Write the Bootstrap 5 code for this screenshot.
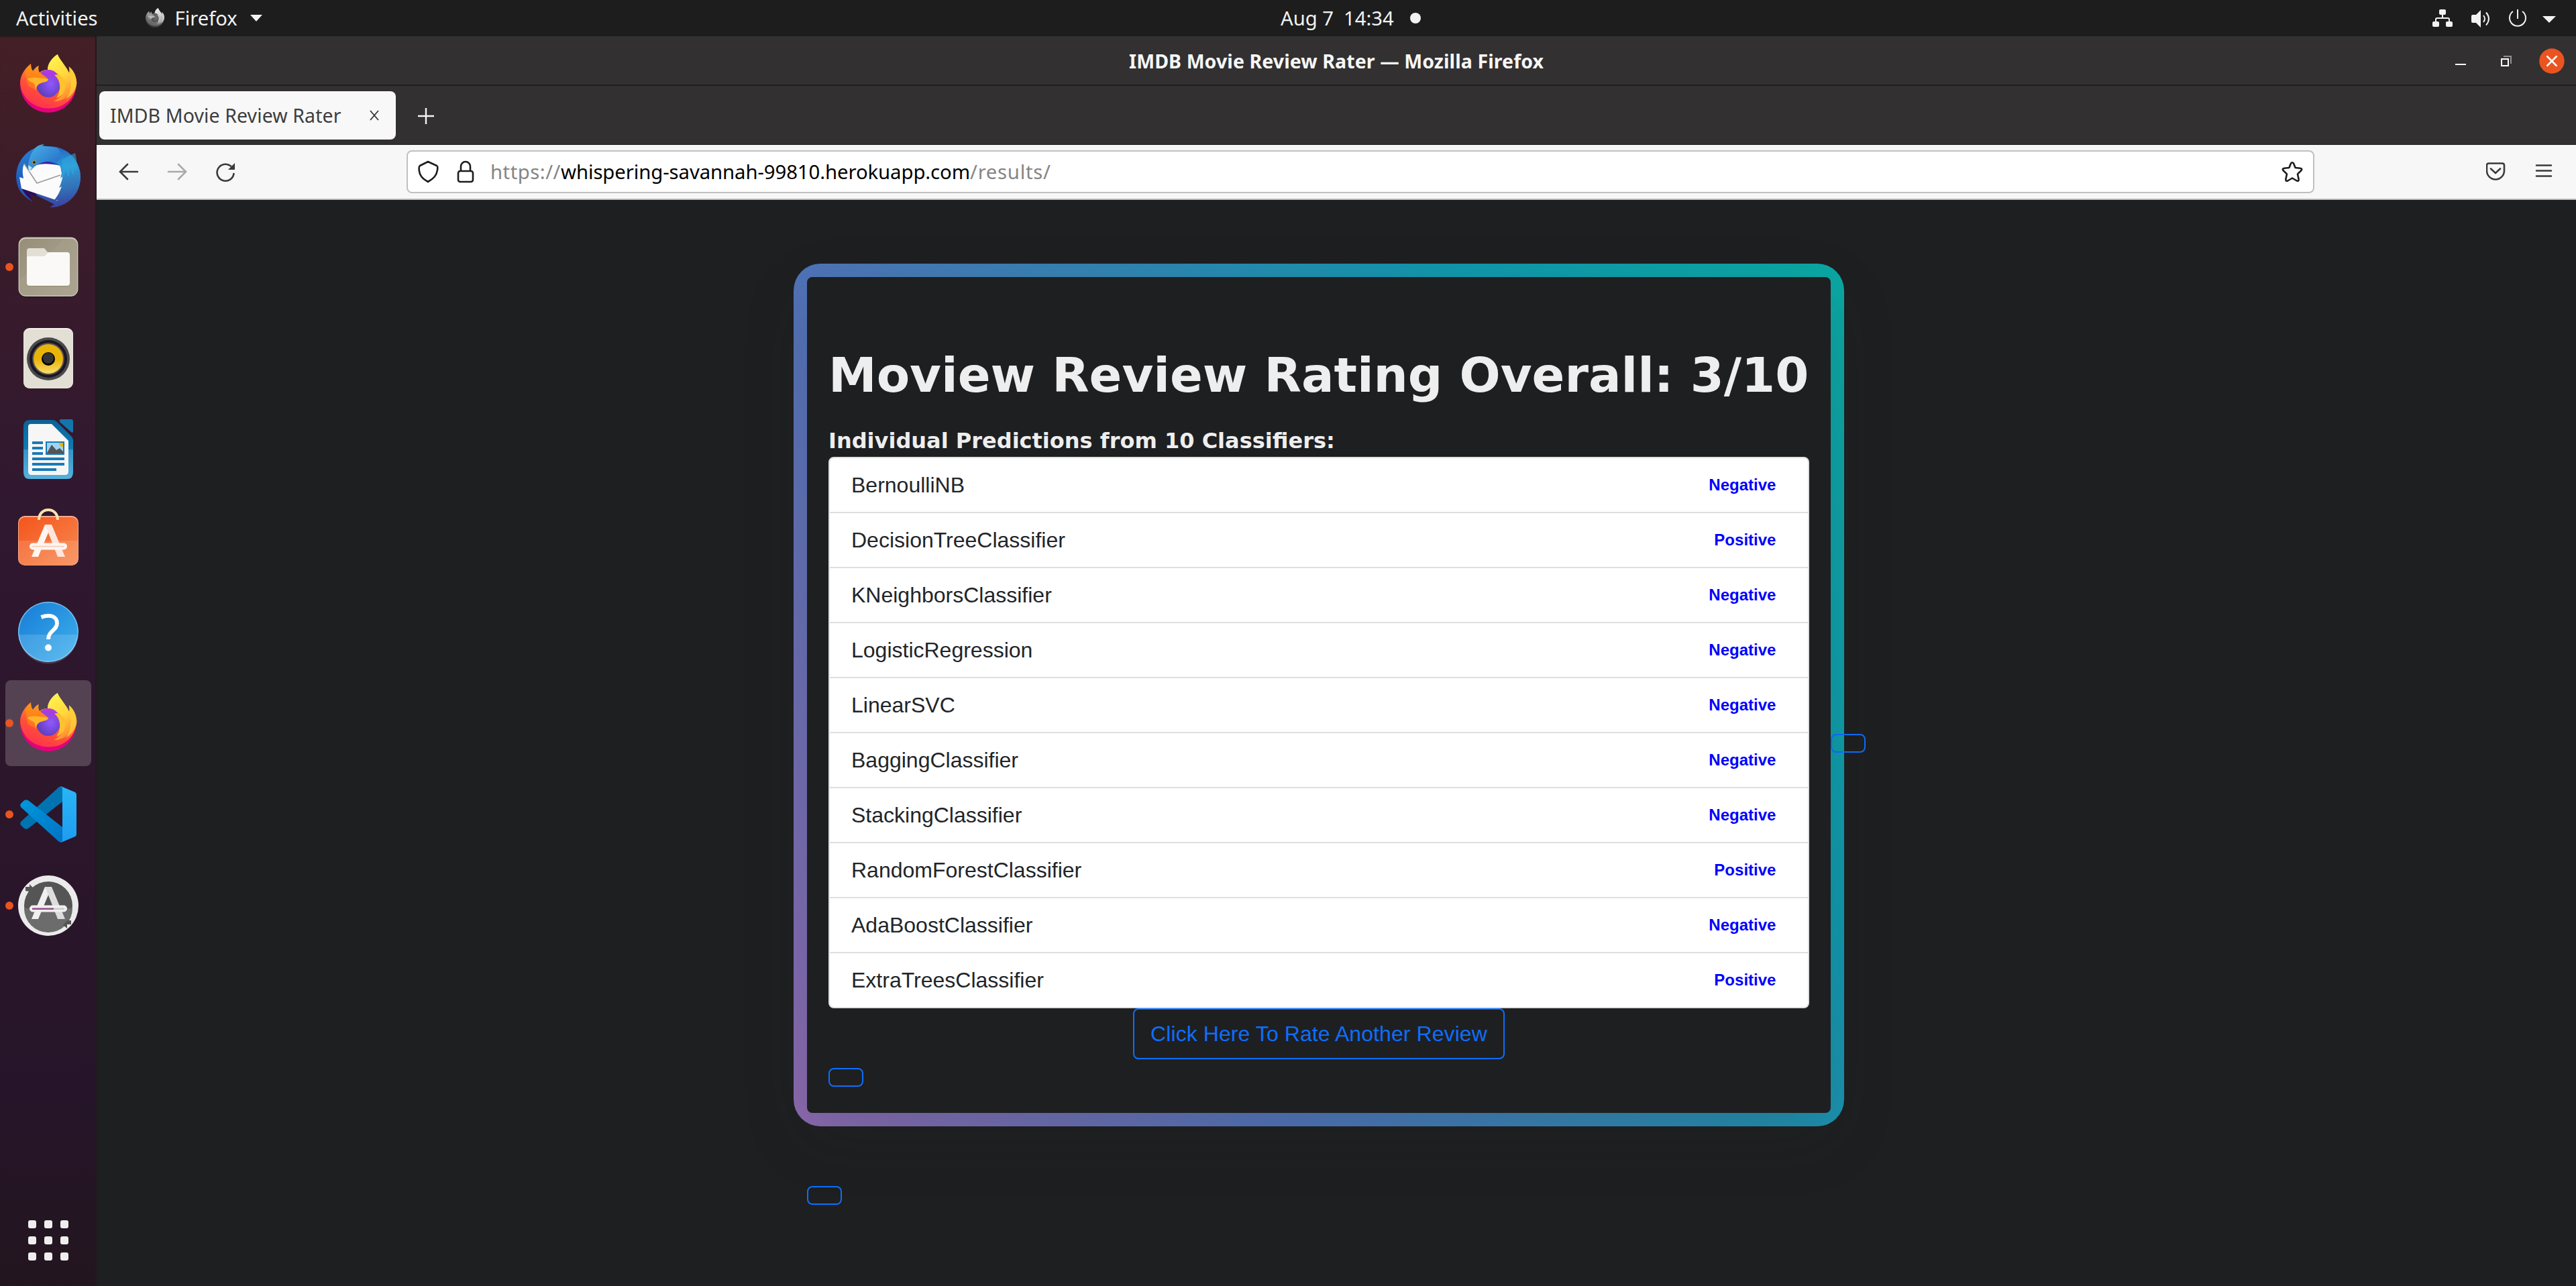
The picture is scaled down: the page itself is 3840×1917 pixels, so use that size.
<!DOCTYPE html>
<html lang="en">
<head>
<meta charset="utf-8">
<title>IMDB Movie Review Rater</title>
<link href="https://cdn.jsdelivr.net/npm/bootstrap@5.3.0/dist/css/bootstrap.min.css" rel="stylesheet">
<style>
html{font-size:32px}
body{height:1917px;overflow:hidden;background:#1e1f21;font-family:"Liberation Sans",Arial,sans-serif}
svg{display:block;flex:none}
.shell-font{font-family:"Noto Sans","Open Sans",sans-serif;font-size:28.5px;line-height:40px;white-space:pre}
.top-panel{height:54px;background:#1d1d1d;color:#f2f2f2;font-size:29.2px;padding-bottom:1px}
.panel-left{width:1909px;padding-left:24px}
.panel-left .app-menu{margin-left:69px}
.app-name{width:95px;margin-left:14px}
.clock-text{width:169px}
.notice-dot{margin-left:24px}
.panel-right{padding-right:30px}
.dock{width:144px;height:1863px;padding-top:8px;background:linear-gradient(#441f26,#3b1c2a 14%,#301830 38%,#291529 72%,#26152a 84%,#23151f);border-right:2px solid #251720;box-shadow:inset 0 3px 3px -2px #1d1d1d}
.dock-tile{width:128px;height:128px;margin:0 auto 8px 8px;border-radius:8px}
.dock-tile.active-tile{background:#544253}
.dock-tile svg{margin-left:16px}
.run-dot{position:absolute;left:0;top:58px;width:12px;height:12px;border-radius:50%;background:#e95420}
.apps-grid{margin:0 0 38px 42px}
.title-bar{height:74px;background:#323031;border-bottom:2px solid #1f1d1e;color:#f7f7f7;padding-top:1px}
.title-text{font-weight:700;margin-left:1539px;letter-spacing:.09px}
.tab-strip{height:88px;background:#323031;border-bottom:1px solid #1f1d1e;padding:8px 4px 7px}
.browser-tab{width:442px;height:72px;border-radius:8px;background:#f8f8f8;color:#3d3d3d;padding:0 24px 0 16px;letter-spacing:.1px}
.plus-icon{margin-left:33px}
.tool-bar{height:82px;background:#f7f7f7;border-bottom:2px solid #c0c0c0}
.url-box{width:2844px;height:64px;border:2px solid #c0c0c0;border-radius:8px;background:#fff;font-size:29.3px}
.url-scheme{color:#858585;letter-spacing:.5px}.url-host{color:#000;letter-spacing:-.08px}.url-path{color:#858585;letter-spacing:.7px}
.star-icon{margin-right:14px}
.viewport-area{height:1619px;padding-top:115px;isolation:isolate}
.result-panel{width:1526px;height:1246px;padding:103px 32px 0;background:#1e1f21;border-radius:8px;color:#eee}
.result-panel::after{content:"";position:absolute;inset:-20px;z-index:-1;border-radius:40px;
 background:linear-gradient(60deg,#f79533,#f37055,#ef4e7b,#a166ab,#5073b8,#1098ad,#07b39b,#6fba82) 79% 50%/300% 300%}
.result-panel h1{font:700 72px/86px "DejaVu Sans",sans-serif;margin:0 0 31px;white-space:nowrap}
.result-panel h2{font:700 32px/48px "DejaVu Sans",sans-serif;margin:0}
.list-group{--bs-list-group-border-width:2px;--bs-list-group-border-color:#dfdfdf;--bs-list-group-border-radius:8px;--bs-list-group-color:#212529;--bs-list-group-bg:#fff}
.verdict{--bs-badge-color:#00f}
.btn{--bs-btn-border-width:2px;--bs-btn-border-radius:8px;--bs-btn-color:#0d6efd;--bs-btn-border-color:#0d6efd}
.rate-btn{letter-spacing:.08px}
.side-btn{margin-top:681px}
.btn-blank{margin-top:13px}
.below-btn{margin-top:109px}
</style>
</head>
<body>
<svg width="0" height="0" class="position-absolute">
 <defs>
  <linearGradient id="ffBody" x1=".8" y1="0" x2=".3" y2="1"><stop offset="0" stop-color="#ffe43d"/><stop offset=".4" stop-color="#ff9a2a"/><stop offset=".7" stop-color="#ff5038"/><stop offset="1" stop-color="#ff3050"/></linearGradient>
  <linearGradient id="ffFlame" x1=".3" y1="0" x2=".6" y2="1"><stop offset="0" stop-color="#fff44f"/><stop offset=".5" stop-color="#ffd83c"/><stop offset="1" stop-color="#ff8a30"/></linearGradient>
  <linearGradient id="ffHead" x1=".5" y1="0" x2=".5" y2="1"><stop offset="0" stop-color="#ff9a0e"/><stop offset="1" stop-color="#ff6a28"/></linearGradient>
  <radialGradient id="ffGlobe" cx=".6" cy=".5" r=".6"><stop offset="0" stop-color="#9059ff"/><stop offset="1" stop-color="#5b3bb5"/></radialGradient>
  <linearGradient id="ffGlobeTop" x1="0" y1="0" x2="0" y2="1"><stop offset="0" stop-color="#c138e6"/><stop offset=".5" stop-color="#b03be6" stop-opacity="0"/></linearGradient>
  <linearGradient id="tbBlue" x1=".2" y1="0" x2=".6" y2="1"><stop offset="0" stop-color="#2a86d3"/><stop offset=".4" stop-color="#1f5fbf"/><stop offset="1" stop-color="#3a4da6"/></linearGradient>
  <linearGradient id="tbHead" x1="0" y1="0" x2="1" y2="1"><stop offset="0" stop-color="#4bb3e8"/><stop offset="1" stop-color="#2065c2"/></linearGradient>
  <linearGradient id="tbWing" x1=".4" y1="0" x2=".5" y2="1"><stop offset="0" stop-color="#2067c5"/><stop offset=".35" stop-color="#2f9ad6"/><stop offset=".7" stop-color="#3371b8"/><stop offset="1" stop-color="#3a3f9e"/></linearGradient>
  <linearGradient id="beige" x1="0" y1="0" x2="1" y2="1"><stop offset="0" stop-color="#968e77"/><stop offset="1" stop-color="#b0a997"/></linearGradient>
  <linearGradient id="yel" x1="0" y1="0" x2="0" y2="1"><stop offset=".5" stop-color="#eab308"/><stop offset="1" stop-color="#fbdc6a"/></linearGradient>
  <linearGradient id="lo" x1="0" y1="0" x2="0" y2="1"><stop offset="0" stop-color="#0b6296"/><stop offset=".5" stop-color="#0d7cb5"/><stop offset=".5" stop-color="#3593c6"/><stop offset="1" stop-color="#55b2de"/></linearGradient>
  <linearGradient id="swb" x1="0" y1="0" x2="1" y2="1"><stop offset="0" stop-color="#f4551c"/><stop offset="1" stop-color="#f78b52"/></linearGradient>
  <linearGradient id="hlp" x1="0" y1="0" x2="1" y2="1"><stop offset="0" stop-color="#177cd6"/><stop offset="1" stop-color="#3fb2ee"/></linearGradient>
  <linearGradient id="vsR" x1="0" y1="0" x2="0" y2="1"><stop offset="0" stop-color="#29b6f6"/><stop offset="1" stop-color="#1f9cf0"/></linearGradient>
  <linearGradient id="vsL" x1="0" y1="0" x2="1" y2="1"><stop offset="0" stop-color="#0098dc"/><stop offset="1" stop-color="#0072c4"/></linearGradient>
  <symbol id="firefox" viewBox="0 0 96 96">
   <path fill="#e6007a" d="M22 17C12 25 6 36 6 48A42 42 0 0 0 90 48L84 30H20Z"/>
   <path fill="url(#ffBody)" d="M61.7 3C53 9 47 17 47 26C41 26 38 28 35 30C33 27 33 23 33.7 19.7C29 22 27 25 25 28C22.500 25 22 21 22 17C12 25 6 35 6 46C8 68 26 83 48 83.500C72 84 88 68 90.300 46C90 36 86 27 78.700 21.300C79.500 25 80 28 79 31C75 21 66 13 61.700 3Z"/>
   <path fill="url(#ffFlame)" d="M61.700 3C53 9 47 17 47 26C56 27 66 34 72 43C74 58 67 68 56 73C72 74 84 62 84 44C84 40 81 34 79 31C75 21 66 13 61.700 3Z"/>
   <path fill="#ffd53a" opacity=".75" d="M78.700 21.300C79.500 25 80 28 79 31C84 42 83 58 74 70C84 63 90 54 90.300 46C90 36 86 27 78.700 21.300Z"/>
   <ellipse cx="48" cy="46.500" rx="18.500" ry="20.500" fill="url(#ffGlobe)"/><ellipse cx="48" cy="46.500" rx="18.500" ry="20.500" fill="url(#ffGlobeTop)"/>
   <path fill="#ffc12e" d="M57 34C60 32.500 63 33 66 35C64 33.500 62 32 61 31.500C70 35 75 45 73 54C71 62 66 66 60 68C67 60 68 42 57 34Z"/>
   <path fill="url(#ffHead)" d="M22 17C22 21 22.500 25 25 28C30 28 34 29 38 32C41 35 46 37 48 40.500C47 44 42 44 38 45.500C32 47 29 51 29.500 56L18 50L14 30Z"/>
   <path fill="#ffb52b" d="M16.700 39.700C22 37 28 37 33 38C38 39 44 38 48 40.500C47 44 42 44 38 45.500C33 47 29.500 51 30 57C28 53 29 48 26 46C23 44 19 43 16.700 39.700Z"/>
  </symbol>
  <symbol id="bigA" viewBox="0 0 96 96">
   <path fill="var(--l)" d="M43 20h10L33 68H23Z"/><path fill="var(--r)" d="M43 20h10L73 68H62L46 27Z"/>
   <rect x="20" y="47.500" width="56" height="10" rx="5" fill="var(--l)"/>
  </symbol>
 </defs>
</svg>

<header class="top-panel shell-font d-flex align-items-center">
 <div class="panel-left d-flex align-items-center"><span>Activities</span>
  <div class="app-menu d-flex align-items-center">
   <svg width="32" height="32" viewBox="0 0 96 96" style="filter:grayscale(1)"><use href="#firefox"/></svg>
   <span class="app-name">Firefox</span>
   <svg class="ms-2" width="20" height="10"><path d="M1 0h18l-9 10Z" fill="#f2f2f2"/></svg>
  </div>
 </div>
 <div class="d-flex align-items-center flex-grow-1"><span class="clock-text">Aug 7  14:34</span><svg class="notice-dot" width="16" height="16"><circle cx="8" cy="8" r="8" fill="#f2f2f2"/></svg></div>
 <div class="panel-right d-flex align-items-center">
  <svg width="184" height="28" viewBox="3626 12 184 28" fill="#f2f2f2">
   <rect x="3636" y="13" width="10" height="8" rx="2"/><rect x="3626" y="31" width="10" height="8" rx="2"/><rect x="3646" y="31" width="10" height="8" rx="2"/>
   <path d="M3641 20v6M3631 32v-4q0-2 2-2h16q2 0 2 2v4" fill="none" stroke="#f2f2f2" stroke-width="2"/>
   <path d="M3686 21h5l7-7v26l-7-7h-5q-2 0-2-2v-8q0-2 2-2Z"/><path d="M3702 22q4 5 0 10M3706 17.500q8 9.500 0 19" fill="none" stroke="#f2f2f2" stroke-width="2"/>
   <path d="M3753 13v14M3746 16a12 12 0 1 0 14 0" fill="none" stroke="#f2f2f2" stroke-width="2"/>
   <path d="M3790 23h20l-10 10Z"/>
  </svg>
 </div>
</header>

<div class="d-flex">
 <nav class="dock d-flex flex-column">
  <div class="dock-tile d-flex align-items-center"><svg width="96" height="96"><use href="#firefox"/></svg></div>
  <div class="dock-tile d-flex align-items-center"><svg width="96" height="96" viewBox="0 0 96 96">
   <path fill="url(#tbBlue)" d="M42 1C36 2 32 3 28 7C12 13 0 30 0 50C1 68 9 78 24 86L20 76L32 78L60 92L50 95C75 96 96 76 96 50C96 24 76 4 48 4C44 4 41 4 38 4Z"/>
   <path fill="#2b0f5c" d="M8 66C13 76 18 81 24 85L21 76L32 79L28 73Z"/>
   <path fill="#34249c" d="M24 32Q44 20 64 34L62 40L30 44Z"/>
   <path fill="#fbfbfb" d="M12 30Q8 38 11 52L5 50L8 67L62 85C72 72 72 58 69 50L66 33Q44 28 30 32L18 40Z"/>
   <path fill="none" stroke="#9a9a9a" stroke-width="1.600" d="M12 30L31 59L66 47"/>
   <path fill="url(#tbWing)" d="M56 5C80 8 96 28 96 50C96 76 76 94 50 95C56 92 60 88 62 84L57 84C64 76 66 68 68 64L64 66C68 58 68 54 70 48L66 52L68 44C68 32 62 26 40 26Z"/>
   <path fill="#2fa8dd" opacity=".6" d="M68 24L88 14Q92 30 90 42L87 36L85 48L81 38L78 50L74 40L69 54Z"/>
   <path fill="url(#tbHead)" d="M18 37C18 24 22 14 28 7Q34 1 42 1L38 3L60 6C72 14 66 24 60 28C44 24 30 30 22 40Z"/>
   <path fill="#bfe6ee" d="M18 32L24 36L19 42Z"/><circle cx="27" cy="28" r="3" fill="#c98d1b"/><circle cx="27" cy="28" r="1.800" fill="#111"/>
  </svg></div>
  <div class="dock-tile position-relative d-flex align-items-center"><i class="run-dot"></i><svg width="96" height="96" viewBox="0 0 96 96">
   <rect x="3" y="3" width="90" height="90" rx="12" fill="#17090f"/><rect x="3.500" y="3.500" width="89" height="88.500" rx="11" fill="#c9c4b6"/><rect x="5" y="6" width="86" height="84.500" rx="9" fill="url(#beige)"/>
   <path fill="#a8a08c" opacity=".5" d="M5 68L72 6H82Q91 6 91 15V81Q91 90 82 90H14Q5 90 5 81Z"/>
   <path fill="#e2dfd5" d="M20 20H42L48 27V40H16V24Q16 20 20 20Z"/><path fill="#8d8570" d="M16 70H80V73Q80 77 76 77H20Q16 77 16 73Z"/><path fill="#faf9f8" d="M18 32H42L48 26H76Q80 26 80 30V72Q80 76 76 76H20Q16 76 16 72V34Q16 32 18 32Z"/>
  </svg></div>
  <div class="dock-tile d-flex align-items-center"><svg width="96" height="96" viewBox="0 0 96 96">
   <rect x="11" y="3" width="74" height="90" rx="9" fill="#f5f4ef"/><rect x="11.500" y="5" width="73" height="87.500" rx="8" fill="#e3dfd4"/>
   <circle cx="48" cy="49" r="32" fill="#4a4a4a"/><circle cx="48" cy="49" r="28" fill="#1b1524"/><circle cx="48" cy="49" r="24" fill="#555"/><circle cx="48" cy="49" r="22" fill="url(#yel)"/><circle cx="48" cy="49" r="10" fill="#000"/><circle cx="48" cy="48" r="8" fill="#333"/>
  </svg></div>
  <div class="dock-tile d-flex align-items-center"><svg width="96" height="96" viewBox="0 0 96 96">
   <path fill="url(#lo)" d="M20 4H54Q58 4 60 6L82 28Q85 31 85 34V82Q85 92 76 92H20Q11 92 11 82V14Q11 4 20 4Z"/>
   <path fill="#1375ab" d="M67 3H82Q85 3 85 6V21Q85 24 82 22L65 7Q64 3 67 3Z"/>
   <path fill="#f6f6f6" d="M22 10H53L78 35V81Q78 86 73 86H23Q18 86 18 81V14Q18 10 22 10Z"/>
   <path fill="#1a7ab5" d="M24 36h16v4H24zM24 44h16v4H24zM24 52h16v4H24zM24 60h48v4H24zM24 68h48v4H24zM24 76h36v4H24zM44 36h28v20H44z"/>
   <path fill="#9ed4f5" d="M46 38h24v16H46z"/><path fill="#eab308" d="M64 38h6v6q-6 0-6-6"/><path fill="#555" d="M46 53L53 41L60 49L65 46L70 51V54H46z"/>
  </svg></div>
  <div class="dock-tile d-flex align-items-center"><svg width="96" height="96" viewBox="0 0 96 96">
   <rect x="3" y="11" width="90" height="74" rx="10" fill="#fba98a"/><rect x="4" y="13" width="88" height="71.500" rx="9" fill="url(#swb)"/><path d="M4 48H92V76Q92 84 83 84H13Q4 84 4 76Z" fill="#fff" opacity=".12"/>
   <path d="M34 17C34-3 62-3 62 17" fill="none" stroke="#ffe2ae" stroke-width="4"/>
   <g transform="translate(0 4)" style="--l:#fff6f0;--r:#fde6dc"><use href="#bigA" width="96" height="96"/><rect x="24" y="51.500" width="48" height="2" fill="#fbd0bd"/></g>
  </svg></div>
  <div class="dock-tile d-flex align-items-center"><svg width="96" height="96" viewBox="0 0 96 96">
   <circle cx="48" cy="48" r="45" fill="#6fc1f5"/><circle cx="48" cy="48" r="43.500" fill="url(#hlp)"/><path d="M4.500 52H91.500A43.500 43.500 0 0 1 4.500 52Z" fill="#fff" opacity=".14"/>
   <path d="M37.500 26C51 21 61 25 61 35C61 46 48 46 48 59" fill="none" stroke="#fff" stroke-width="5.800"/><circle cx="48" cy="71.500" r="5" fill="#fff"/>
  </svg></div>
  <div class="dock-tile active-tile position-relative d-flex align-items-center"><i class="run-dot"></i><svg width="96" height="96"><use href="#firefox"/></svg></div>
  <div class="dock-tile position-relative d-flex align-items-center"><i class="run-dot"></i><svg width="96" height="96" viewBox="0 0 96 96">
   <path fill="#0073b0" d="M69 7L69 29L18 69Q14 71 11 68L7 64Q5 61 8 58L63 8Q66 5 69 7Z"/>
   <path fill="url(#vsL)" d="M69 89L69 67L18 27Q14 25 11 28L7 32Q5 35 8 38L63 88Q66 91 69 89Z"/>
   <path fill="url(#vsR)" d="M66 6Q67 6 69 7L88 15Q90 16 90 19V77Q90 80 88 81L69 89Q67 90 66 90Q69 89 69 86V10Q69 7 66 6Z"/>
  </svg></div>
  <div class="dock-tile position-relative d-flex align-items-center"><i class="run-dot"></i><svg width="96" height="96" viewBox="0 0 96 96">
   <circle cx="48" cy="48" r="45" fill="#ebebeb"/><circle cx="48" cy="48" r="36" fill="#555"/><path d="M12 52H84A36 36 0 0 1 12 52Z" fill="#6c6c6c"/>
   <path fill="#555" d="M14 20h6v-4L26 22L20 27L14 26ZM82 70v6h-6v6L70 77L76 70Z"/>
   <g style="--l:#f0f0f0;--r:#dcdcdc"><use href="#bigA" width="96" height="96"/><rect x="24" y="51.500" width="32" height="2.500" fill="#924d8b"/><rect x="56" y="51.500" width="16" height="2.500" fill="#ccc"/></g>
  </svg></div>
  <svg class="apps-grid mt-auto" width="60" height="60" fill="#eee"><g id="dotrow"><rect width="12" height="12" rx="3"/><rect x="24" width="12" height="12" rx="3"/><rect x="48" width="12" height="12" rx="3"/></g><use href="#dotrow" y="24"/><use href="#dotrow" y="48"/></svg>
 </nav>

 <main class="flex-grow-1">
  <div class="title-bar shell-font d-flex align-items-center justify-content-between">
   <span class="title-text">IMDB Movie Review Rater — Mozilla Firefox</span>
   <svg width="180" height="40" viewBox="3660 70 180 40">
    <path d="M3660 94h16v2h-16z" fill="#fff"/><path d="M3732 83h11v11" fill="none" stroke="#929192" stroke-width="2"/><rect x="3729" y="87" width="10" height="10" fill="none" stroke="#fff" stroke-width="2"/>
    <circle cx="3804" cy="90" r="18.700" fill="#e95420"/><path d="M3796.500 82.500l15 15M3811.500 82.500l-15 15" stroke="#fff" stroke-width="2.600"/>
   </svg>
  </div>
  <div class="tab-strip d-flex align-items-center">
   <div class="browser-tab shell-font d-flex align-items-center justify-content-between"><span>IMDB Movie Review Rater</span>
    <svg width="16" height="16"><path d="M2 1l12 14M14 1L2 15" stroke="#333" stroke-width="1.800"/></svg></div>
   <svg class="plus-icon" width="24" height="26"><path d="M12 2v24M0 14h24" stroke="#f5f5f5" stroke-width="2.400"/></svg>
  </div>
  <div class="tool-bar d-flex align-items-center">
   <svg width="462" height="40" viewBox="144 237 462 40" fill="none" stroke-width="2.600" stroke-linecap="round">
    <path d="M205 257h-26M190 246l-11 11l11 11" stroke="#3a3a3a"/><path d="M251 257h26M266 246l11 11l-11 11" stroke="#a9a9a9"/>
    <path d="M348.500 260A12.500 12.500 0 1 1 344 248.500" stroke="#3a3a3a"/><path d="M350 244v10h-10Z" fill="#3a3a3a" stroke="none"/>
   </svg>
   <div class="url-box shell-font d-flex align-items-center">
    <svg width="123" height="40" viewBox="608 236 123 40" fill="none" stroke="#1c1c1c" stroke-width="2.600" stroke-linejoin="round">
     <path d="M638 241l13 6q1.500 1 1.300 3C652 262 645 267 638 271C631 267 624 262 624.700 250q0-2 1.300-3Z"/>
     <rect x="683" y="255" width="22" height="16" rx="3"/><path d="M687 255v-7a7 7 0 0 1 14 0v7"/>
    </svg>
    <span><span class="url-scheme">https://</span><span class="url-host">whispering-savannah-99810.herokuapp.com</span><span class="url-path">/results/</span></span>
    <svg class="star-icon ms-auto" width="34" height="34" viewBox="0 0 34 34"><path d="M17 3.200Q18.600 3.200 19.200 5L21.600 11L28.500 11.800Q32.500 12.300 30.500 15L25 20.400L26.600 28Q27 31.600 23.800 30.500L17 26.500L10.200 30.500Q7 31.600 7.400 28L9 20.400L3.500 15Q1.500 12.300 5.500 11.800L12.400 11L14.800 5Q15.400 3.200 17 3.200Z" fill="none" stroke="#1c1c1c" stroke-width="2.600" stroke-linejoin="round"/></svg>
   </div>
   <svg class="ms-auto" width="134" height="32" viewBox="3706 241 134 32" fill="none" stroke="#3a3a3a" stroke-width="2.600" stroke-linecap="round">
    <path d="M3710 244.500h20q3 0 3 3v8a13 13 0 0 1-26 0v-8q0-3 3-3ZM3713 252.500l7 6.500l7-6.500M3781 247.500h22M3781 255.500h22M3781 263.500h22"/>
   </svg>
  </div>

  <div class="viewport-area d-flex justify-content-center align-items-start">
   <div>
    <section class="result-panel shadow-lg position-relative d-flex flex-column">
     <h1>Moview Review Rating Overall: 3/10</h1>
     <h2>Individual Predictions from 10 Classifiers:</h2>
     <ul class="list-group">
      <li class="list-group-item d-flex justify-content-between align-items-center">BernoulliNB<span class="badge verdict">Negative</span></li>
      <li class="list-group-item d-flex justify-content-between align-items-center">DecisionTreeClassifier<span class="badge verdict">Positive</span></li>
      <li class="list-group-item d-flex justify-content-between align-items-center">KNeighborsClassifier<span class="badge verdict">Negative</span></li>
      <li class="list-group-item d-flex justify-content-between align-items-center">LogisticRegression<span class="badge verdict">Negative</span></li>
      <li class="list-group-item d-flex justify-content-between align-items-center">LinearSVC<span class="badge verdict">Negative</span></li>
      <li class="list-group-item d-flex justify-content-between align-items-center">BaggingClassifier<span class="badge verdict">Negative</span></li>
      <li class="list-group-item d-flex justify-content-between align-items-center">StackingClassifier<span class="badge verdict">Negative</span></li>
      <li class="list-group-item d-flex justify-content-between align-items-center">RandomForestClassifier<span class="badge verdict">Positive</span></li>
      <li class="list-group-item d-flex justify-content-between align-items-center">AdaBoostClassifier<span class="badge verdict">Negative</span></li>
      <li class="list-group-item d-flex justify-content-between align-items-center">ExtraTreesClassifier<span class="badge verdict">Positive</span></li>
     </ul>
     <button class="btn btn-outline-primary rate-btn align-self-center">Click Here To Rate Another Review</button>
     <button class="btn btn-outline-primary btn-blank align-self-start" aria-label="Home"></button>
    </section>
    <button class="btn btn-outline-primary below-btn d-block" aria-label="Back"></button>
   </div>
   <button class="btn btn-outline-primary side-btn" aria-label="Next"></button>
  </div>
 </main>
</div>
<script src="https://cdn.jsdelivr.net/npm/bootstrap@5.3.0/dist/js/bootstrap.bundle.min.js"></script>
</body>
</html>
